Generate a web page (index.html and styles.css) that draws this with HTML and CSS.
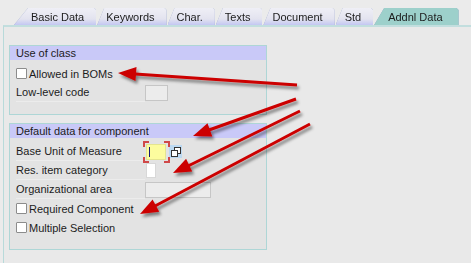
FILE: index.html
```html
<!DOCTYPE html>
<html lang="en">
<head>
    <meta charset="UTF-8">
    <meta name="viewport" content="width=device-width, initial-scale=1.0">
    <title>Material - Addnl Data</title>
    <link rel="stylesheet" href="styles.css">
</head>
<body>
    <div class="tabstrip">
        <div class="tab first"><span>Basic Data</span></div>
        <div class="tab"><span>Keywords</span></div>
        <div class="tab"><span>Char.</span></div>
        <div class="tab"><span>Texts</span></div>
        <div class="tab"><span>Document</span></div>
        <div class="tab"><span>Std</span></div>
        <div class="tab active"><span>Addnl Data</span></div>
    </div>

    <div class="panel">
        <section class="group">
            <div class="group-title">Use of class</div>
            <div class="group-body">
                <label class="row check"><span class="box"></span>Allowed in BOMs</label>
                <div class="row field">
                    <span class="label">Low-level code</span>
                    <span class="input low-level"></span>
                </div>
            </div>
        </section>

        <section class="group second">
            <div class="group-title">Default data for component</div>
            <div class="group-body">
                <div class="row field">
                    <span class="label">Base Unit of Measure</span>
                    <span class="focus">
                        <span class="input unit"><span class="caret"></span></span>
                        <svg class="corners" width="27" height="22" viewBox="0 0 27 22">
                            <path d="M1 6V1h5M21 1h5v5M26 16v5h-5M6 21H1v-5" fill="none" stroke="#d04848" stroke-width="2"/>
                        </svg>
                    </span>
                    <span class="f4">
                        <svg width="12" height="12" viewBox="0 0 12 12">
                            <rect x="4.5" y="1.5" width="6" height="6" fill="#fff" stroke="#333"/>
                            <rect x="1.5" y="4.5" width="6" height="6" fill="#fff" stroke="#333"/>
                        </svg>
                    </span>
                </div>
                <div class="row field">
                    <span class="label">Res. item category</span>
                    <span class="input item-cat"></span>
                </div>
                <div class="row field">
                    <span class="label">Organizational area</span>
                    <span class="input org-area"></span>
                </div>
                <label class="row check"><span class="box"></span>Required Component</label>
                <label class="row check"><span class="box"></span>Multiple Selection</label>
            </div>
        </section>
    </div>

    <svg class="arrows" width="471" height="263" viewBox="0 0 471 263">
        <defs>
            <filter id="shadow" x="-10%" y="-10%" width="130%" height="140%">
                <feDropShadow dx="2" dy="3" stdDeviation="1.6" flood-color="#000" flood-opacity="0.45"/>
            </filter>
        </defs>
        <g filter="url(#shadow)" fill="#cc0000" stroke="#cc0000">
            <line x1="297" y1="85" x2="135" y2="74" stroke-width="3"/>
            <polygon points="118,73 136.5,67 135.5,81" stroke="none"/>

            <line x1="296" y1="99" x2="209" y2="130" stroke-width="3"/>
            <polygon points="193,136 212.3,136.5 207.5,123.3" stroke="none"/>

            <line x1="300" y1="111" x2="188" y2="166" stroke-width="3"/>
            <polygon points="173,173 192.2,171.4 186.1,158.8" stroke="none"/>

            <line x1="310" y1="124" x2="155" y2="206" stroke-width="3"/>
            <polygon points="140,214 159.2,211.8 152.6,199.4" stroke="none"/>
        </g>
    </svg>
</body>
</html>
```

FILE: styles.css
```css
*{
    margin: 0;
    padding: 0;
    box-sizing: border-box;
}

body{
    position: relative;
    width: 471px;
    height: 263px;
    overflow: hidden;
    background-color: #ebebeb;
    font-family: "Liberation Sans", Arial, sans-serif;
    font-size: 11px;
    color: #1c1c1c;
}

/* tabs */
.tabstrip{
    display: flex;
    gap: 1px;
    padding: 8px 0 0 14px;
    height: 25px;
}

.tab{
    height: 17px;
    filter: drop-shadow(0 0 0.6px #8e9cc4);
}

.tab span{
    display: block;
    height: 100%;
    padding: 2px 12px 0 9px;
    line-height: 14px;
    white-space: nowrap;
    background: linear-gradient(#efeff6, #e3e3ef 65%, #c3c7f2);
    clip-path: polygon(7px 0, calc(100% - 2px) 0, 100% 2px, 100% 100%, 0 100%);
}

.tab.first span{
    padding-left: 17px;
    padding-right: 12px;
    clip-path: polygon(14px 0, calc(100% - 2px) 0, 100% 2px, 100% 100%, 0 100%);
}

.tab.active span{
    padding-left: 14px;
    padding-right: 16px;
    background: #9dd0cb;
    clip-path: polygon(10px 0, calc(100% - 2px) 0, 100% 2px, 100% 100%, 0 100%);
}

/* panel */
.panel{
    margin-left: 3px;
    height: 238px;
    padding: 18px 0 0 5px;
    background-color: #e9e9e9;
    border-top: 2px solid #c2dede;
    border-left: 1px solid #b8dada;
}

.group{
    width: 258px;
    background-color: #e3e3e3;
    border: 1px solid #aed6d6;
}

.group.second{
    margin-top: 8px;
}

.group-title{
    height: 14px;
    padding-left: 6px;
    line-height: 14px;
    background-color: #c9c9f8;
}

.group-body{
    padding: 4px 0 12px 6px;
}

.row{
    display: flex;
    align-items: center;
    height: 19px;
}

.check .box{
    width: 11px;
    height: 11px;
    margin-right: 2px;
    background-color: #fff;
    border: 1px solid #8c8c8c;
    border-radius: 1px;
}

.field .label{
    width: 129px;
    align-self: stretch;
    display: flex;
    align-items: center;
    border-bottom: 1px solid #ececec;
}

.input{
    display: block;
    height: 16px;
    background-color: #ececec;
    border: 1px solid #c6c6c6;
}

.low-level{
    width: 23px;
}

.item-cat{
    width: 10px;
    height: 15px;
    margin-left: 1px;
    background-color: #fff;
    border-color: #d8d8d8;
}

.org-area{
    width: 66px;
}

/* focused field with red corner marks */
.focus{
    position: relative;
    padding-left: 1px;
}

.unit{
    position: relative;
    width: 20px;
    background-color: #fcfc9e;
    border-color: #e4e490;
}

.caret{
    position: absolute;
    left: 2px;
    top: 2px;
    width: 1px;
    height: 10px;
    background-color: #14147a;
}

.corners{
    position: absolute;
    left: -2px;
    top: -3px;
}

.f4{
    display: flex;
    align-items: center;
    justify-content: center;
    width: 13px;
    height: 13px;
    margin-left: 3px;
    background-color: #bcd9f2;
}

.arrows{
    position: absolute;
    left: 0;
    top: 0;
    pointer-events: none;
}
```
